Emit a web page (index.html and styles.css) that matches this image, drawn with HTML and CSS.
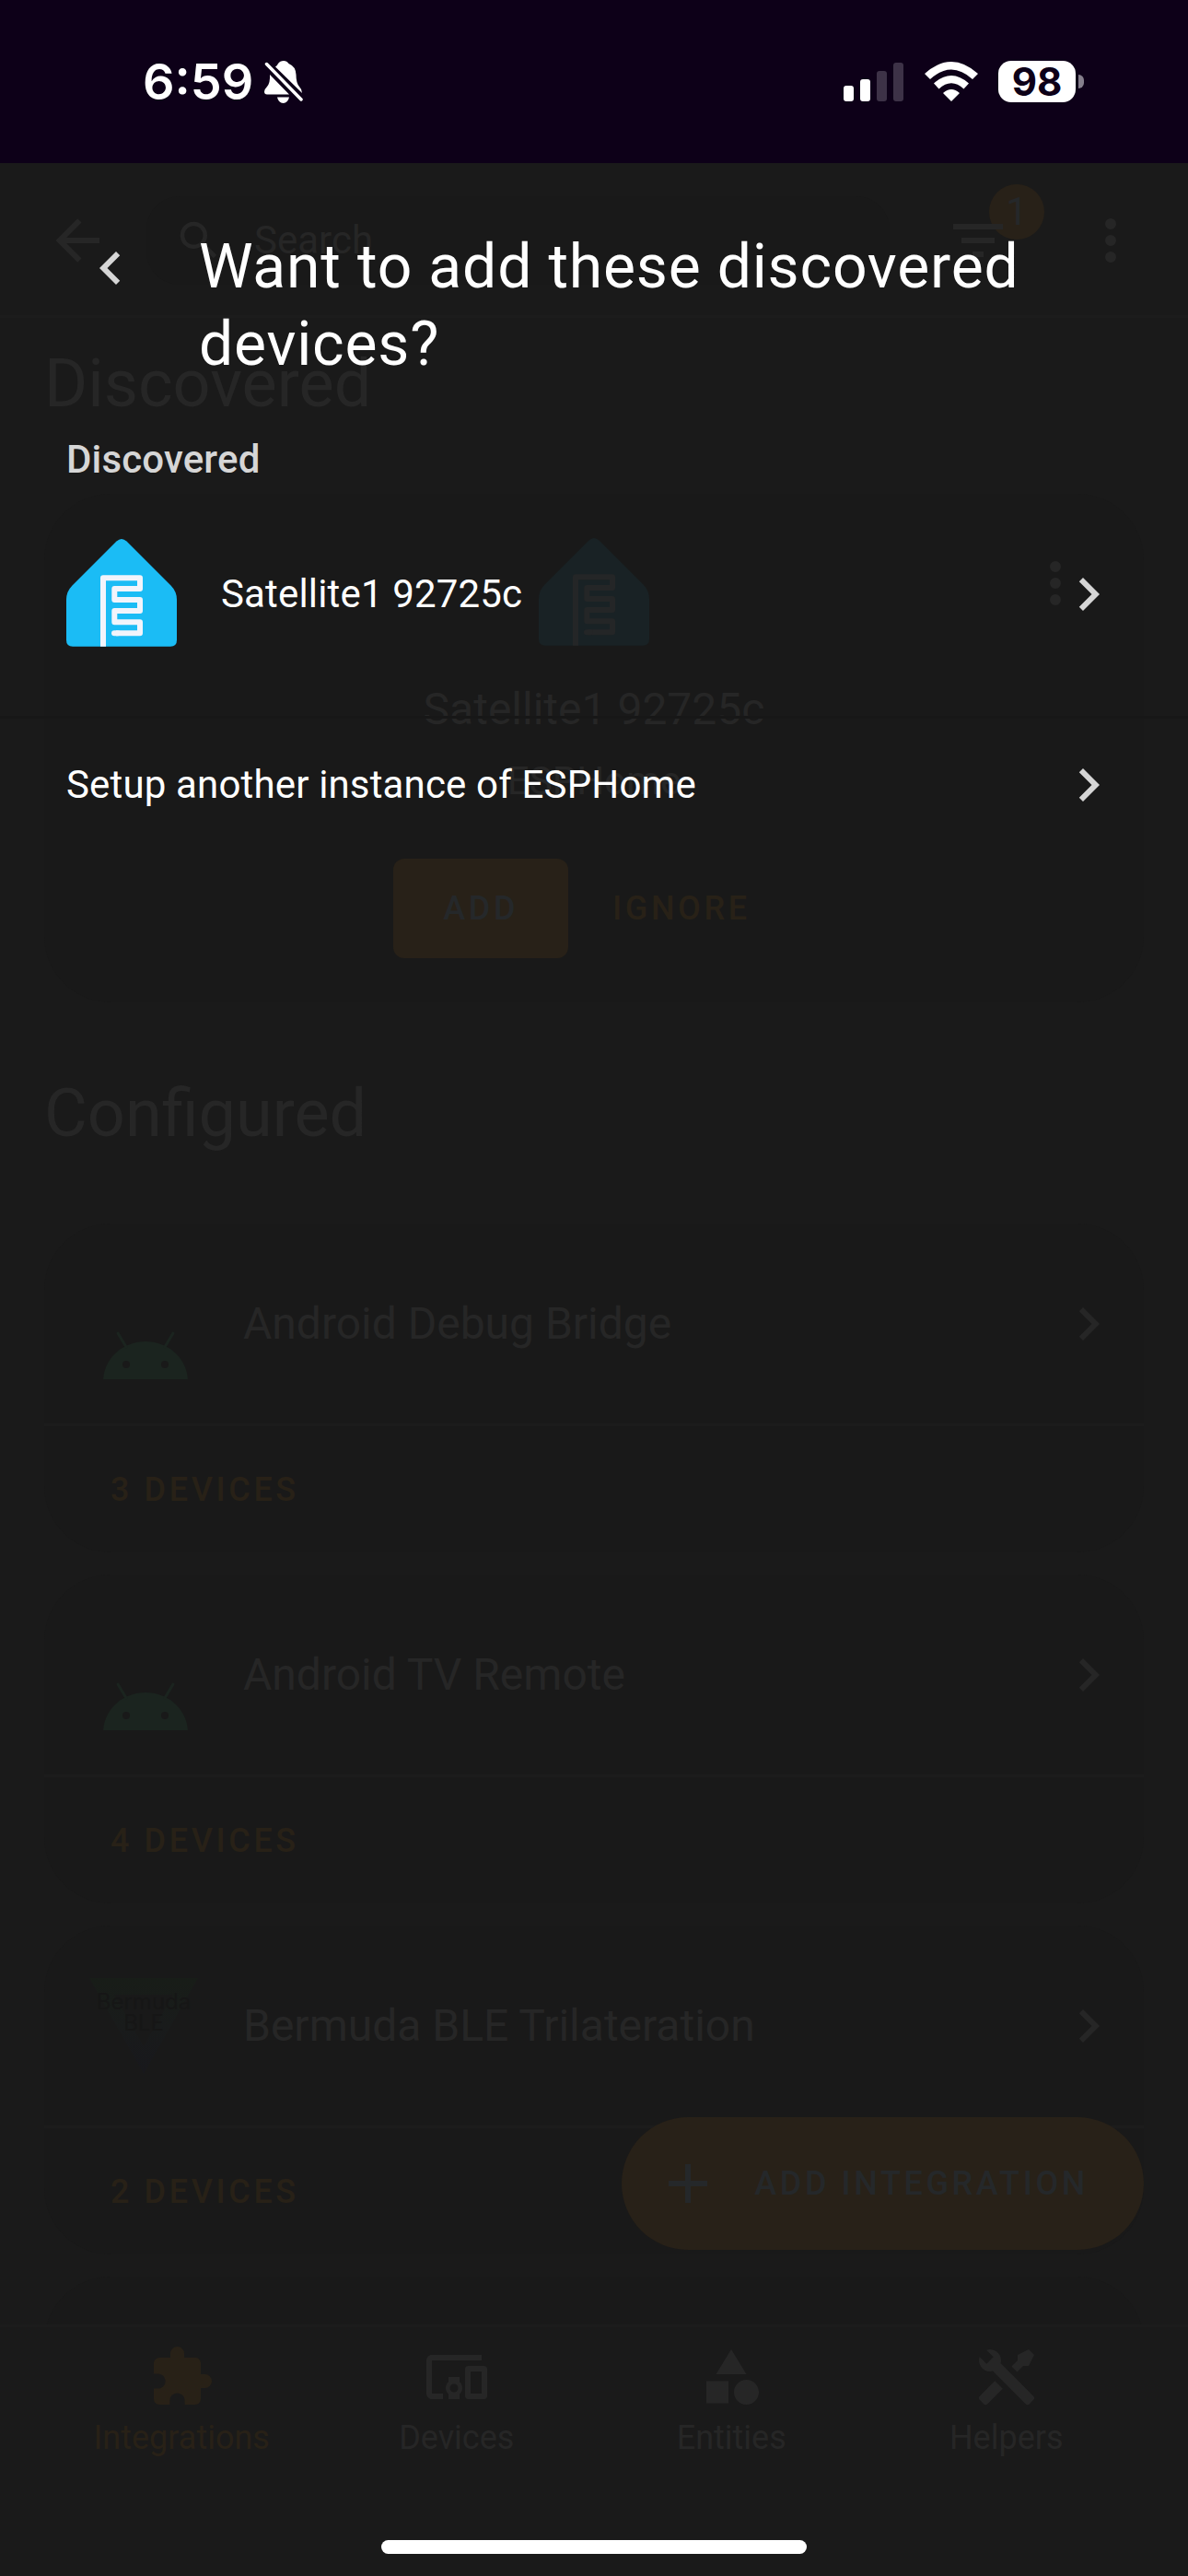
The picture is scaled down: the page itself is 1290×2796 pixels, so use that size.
FILE: index.html
```html
<!DOCTYPE html>
<html lang="en">
<head>
<meta charset="utf-8">
<meta name="viewport" content="width=device-width, initial-scale=1">
<title>Integrations</title>
<link rel="stylesheet" href="styles.css">
</head>
<body>
<svg class="sprite" aria-hidden="true">
  <symbol id="chevron-right" viewBox="0 0 24 24"><path d="M8.59,16.58L13.17,12L8.59,7.41L10,6L16,12L10,18L8.59,16.58Z"/></symbol>
  <symbol id="dots" viewBox="0 0 24 24"><path d="M12,16A2,2 0 0,1 14,18A2,2 0 0,1 12,20A2,2 0 0,1 10,18A2,2 0 0,1 12,16M12,10A2,2 0 0,1 14,12A2,2 0 0,1 12,14A2,2 0 0,1 10,12A2,2 0 0,1 12,10M12,4A2,2 0 0,1 14,6A2,2 0 0,1 12,8A2,2 0 0,1 10,6A2,2 0 0,1 12,4Z"/></symbol>
  <symbol id="esphome" viewBox="0 0 120 120">
    <path d="M54.5 2.5Q60-2.5 65.5 2.5L113.5 50.5Q120 57 120 66V109.700Q120 116.700 113 116.700H7Q0 116.700 0 109.700V66Q0 57 6.500 50.500Z"/>
    <g fill="none" stroke="currentColor" stroke-width="6" stroke-linejoin="round">
      <path d="M40 116.700V42.300H80V54H52.300V66H80V78H52.300V90.300H80V102.300H54"/>
      <path d="M56 102.300H52" stroke-linecap="round"/>
    </g>
  </symbol>
  <symbol id="android" viewBox="0 0 120 120">
    <path d="M16 120C18 95 39 79 62 79S106 95 108 120Z"/>
    <path d="M32 70L41 85M92 70L83 85" fill="none" stroke="#1b241f" stroke-width="3" stroke-linecap="round"/>
    <g fill="#191919"><circle cx="41" cy="104" r="4"/><circle cx="83" cy="104" r="4"/></g>
  </symbol>
</svg>

<header class="status">
  <div class="status-group">
    <span class="time">6:59</span>
    <svg class="bell" viewBox="0 0 42 46" aria-hidden="true">
      <path fill="#fff" d="M12 6.500Q14 5.500 15 3Q17 0 21 0Q24.500 0 26.500 3Q34 6 34.500 15Q34.500 24 38 28Q41 31 41 35ZM6 15L27 36.500H3Q0 36.500 0 33.500Q0 31 3 28Q6.500 24 6 15ZM14 39.500H27Q25.500 46 20.500 46T14 39.500Z"/>
      <path d="M2.500 3.500L40 42" stroke="#fff" stroke-width="3.500" stroke-linecap="round"/>
    </svg>
  </div>
  <div class="status-group status-right">
    <svg class="signal" viewBox="0 0 66 42" aria-hidden="true"><g fill="#fff"><rect y="25" width="11" height="17" rx="3"/><rect x="18" y="18" width="11" height="24" rx="3"/></g><g fill="#3d3247"><rect x="36" y="9" width="11" height="33" rx="3"/><rect x="54" width="11" height="42" rx="3"/></g></svg>
    <svg class="wifi" viewBox="0 0 58 43" aria-hidden="true"><path fill="#fff" d="M29 43L20 34Q29 26 38 34ZM15.500 29.500L10 23.500Q29 6.500 48 23.500L42.500 29.500Q29 17 15.500 29.500ZM6 19L0 13Q29-13 58 13L52 19Q29-2 6 19Z"/></svg>
    <div class="battery"><span class="battery-body">98</span><span class="battery-tip"></span></div>
  </div>
</header>

<main class="stage">
  <div class="app">
    <div class="scroll">
      <div class="toolbar">
        <button class="icon-btn" aria-label="Back"><svg class="icon" viewBox="0 0 24 24"><path d="M20,11V13H8L13.5,18.5L12.080,19.920L4.160,12L12.080,4.080L13.500,5.500L8,11H20Z"/></svg></button>
        <label class="search">
          <svg class="icon-small" viewBox="0 0 24 24"><path d="M9.5,3A6.5,6.5 0 0,1 16,9.5C16,11.11 15.41,12.59 14.44,13.73L14.71,14H15.5L20.5,19L19,20.5L14,15.5V14.71L13.73,14.44C12.59,15.41 11.11,16 9.5,16A6.5,6.5 0 0,1 3,9.5A6.5,6.5 0 0,1 9.5,3M9.5,5C7,5 5,7 5,9.5C5,12 7,14 9.5,14C12,14 14,12 14,9.5C14,7 12,5 9.5,5Z"/></svg>
          <input type="search" placeholder="Search" aria-label="Search integrations">
        </label>
        <button class="icon-btn filter" aria-label="Filter"><svg class="icon" viewBox="0 0 24 24"><path d="M6,13H18V11H6M3,6V8H21V6M10,18H14V16H10V18Z"/></svg><span class="badge">1</span></button>
        <button class="icon-btn" aria-label="More"><svg class="icon"><use href="#dots"/></svg></button>
      </div>

      <div class="content">
        <h2 class="section-title">Discovered</h2>
        <section class="card discovered">
          <button class="icon-btn card-menu" aria-label="More"><svg class="icon"><use href="#dots"/></svg></button>
          <svg class="brand brand-ghost"><use href="#esphome"/></svg>
          <h3 class="card-title">Satellite1 92725c</h3>
          <p class="card-sub">ESPHome</p>
          <div class="actions"><button class="btn btn-filled">ADD</button><button class="btn">IGNORE</button></div>
        </section>

        <h2 class="section-title">Configured</h2>
        <div class="cards">
          <section class="card">
            <a class="card-head" href="#adb"><svg class="brand brand-android"><use href="#android"/></svg><span class="card-title">Android Debug Bridge</span><svg class="icon"><use href="#chevron-right"/></svg></a>
            <a class="card-foot" href="#adb-devices">3 DEVICES</a>
          </section>
          <section class="card">
            <a class="card-head" href="#atv"><svg class="brand brand-android"><use href="#android"/></svg><span class="card-title">Android TV Remote</span><svg class="icon"><use href="#chevron-right"/></svg></a>
            <a class="card-foot" href="#atv-devices">4 DEVICES</a>
          </section>
          <section class="card">
            <a class="card-head" href="#bermuda">
              <svg class="brand" viewBox="0 0 120 120">
                <defs><linearGradient id="sea" x2="0" y2="1"><stop offset="0" stop-color="#181d18"/><stop offset=".5" stop-color="#191b1b"/><stop offset="1" stop-color="#18181c"/></linearGradient></defs>
                <path fill="url(#sea)" fill-rule="evenodd" d="M1 8H119L60 112ZM28 26L60 82L92 26Z"/>
                <g class="bermuda-text" text-anchor="middle"><text x="60" y="42">Bermuda</text><text x="60" y="65">BLE</text></g>
              </svg>
              <span class="card-title">Bermuda BLE Trilateration</span><svg class="icon"><use href="#chevron-right"/></svg></a>
            <a class="card-foot" href="#bermuda-devices">2 DEVICES</a>
          </section>
          <section class="card"></section>
        </div>
      </div>
      <button class="fab"><svg class="icon" viewBox="0 0 24 24"><path d="M19,13H13V19H11V13H5V11H11V5H13V11H19V13Z"/></svg>ADD INTEGRATION</button>
    </div>

    <nav class="tabs">
      <a class="tab tab-active" href="#integrations"><svg class="icon" viewBox="0 0 24 24"><path d="M20.5,11H19V7C19,5.89 18.1,5 17,5H13V3.5A2.5,2.5 0 0,0 10.5,1A2.5,2.5 0 0,0 8,3.5V5H4A2,2 0 0,0 2,7V10.8H3.5C5,10.8 6.2,12 6.2,13.5C6.2,15 5,16.2 3.5,16.2H2V20A2,2 0 0,0 4,22H7.8V20.5C7.8,19 9,17.8 10.5,17.8C12,17.8 13.2,19 13.2,20.5V22H17A2,2 0 0,0 19,20V16H20.5A2.5,2.5 0 0,0 23,13.5A2.5,2.5 0 0,0 20.5,11Z"/></svg>Integrations</a>
      <a class="tab" href="#devices"><svg class="icon" viewBox="0 0 24 24"><path d="M3 6H21V4H3C1.9 4 1 4.9 1 6V18C1 19.1 1.9 20 3 20H7V18H3V6M13 12H9V13.78C8.39 14.33 8 15.11 8 16C8 16.89 8.39 17.67 9 18.22V20H13V18.22C13.61 17.67 14 16.88 14 16S13.61 14.33 13 13.78V12M11 17.5C10.17 17.5 9.5 16.83 9.5 16S10.17 14.5 11 14.5 12.5 15.17 12.5 16 11.83 17.5 11 17.5M22 8H16C15.5 8 15 8.500 15 9V19C15 19.500 15.500 20 16 20H22C22.500 20 23 19.500 23 19V9C23 8.500 22.500 8 22 8M21 18H17V10H21V18Z"/></svg>Devices</a>
      <a class="tab" href="#entities"><svg class="icon" viewBox="0 0 24 24"><path d="M11,13.5V21.5H3V13.5H11M12,2L17.5,11H6.5L12,2M17.5,13C20,13 22,15 22,17.5C22,20 20,22 17.5,22C15,22 13,20 13,17.5C13,15 15,13 17.5,13Z"/></svg>Entities</a>
      <a class="tab" href="#helpers"><svg class="icon" viewBox="0 0 24 24"><path d="M21.71 20.29L20.29 21.71A1 1 0 0 1 18.88 21.71L7 9.85A3.81 3.81 0 0 1 6 10A4 4 0 0 1 2.22 4.7L4.76 7.24L5.29 6.71L6.71 5.29L7.24 4.76L4.7 2.22A4 4 0 0 1 10 6A3.81 3.81 0 0 1 9.85 7L21.71 18.88A1 1 0 0 1 21.71 20.29M2.29 18.88A1 1 0 0 0 2.29 20.29L3.71 21.71A1 1 0 0 0 5.12 21.71L10.59 16.25L7.76 13.42M20 2L16 4V6L13.83 8.17L15.83 10.17L18 8H20L22 4Z"/></svg>Helpers</a>
    </nav>
  </div>

  <div class="dialog" role="dialog" aria-labelledby="dialog-title">
    <div class="dialog-head">
      <button class="icon-btn dialog-back" aria-label="Back"><svg class="icon" viewBox="0 0 24 24"><path d="M15.41,16.58L10.83,12L15.41,7.41L14,6L8,12L14,18L15.41,16.58Z"/></svg></button>
      <h1 id="dialog-title">Want to add these discovered devices?</h1>
    </div>
    <h2 class="dialog-label">Discovered</h2>
    <button class="row row-device"><svg class="brand brand-esphome"><use href="#esphome"/></svg><span class="row-text">Satellite1 92725c</span><svg class="icon"><use href="#chevron-right"/></svg></button>
    <hr class="divider">
    <button class="row"><span class="row-text">Setup another instance of ESPHome</span><svg class="icon"><use href="#chevron-right"/></svg></button>
    <div class="home-indicator"></div>
  </div>
</main>
</body>
</html>
```
FILE: styles.css
```css
:root {
  --page: #1a1a1a;
  --card: #191919;
  --line: #1c1c1c;
  --dim: #262626;
  --amber-fill: #282118;
  --amber-text: #282117;
  --on-amber: #25282a;
}

* { box-sizing: border-box; }

body {
  margin: 0;
  height: 100vh;
  display: flex;
  flex-direction: column;
  background: var(--page);
  color: #fff;
  font-family: Roboto, "Liberation Sans", sans-serif;
}

h1, h2, h3, p { margin: 0; font-weight: 400; }
a { color: inherit; text-decoration: none; }
button {
  padding: 0;
  border: 0;
  background: none;
  color: inherit;
  font: inherit;
  letter-spacing: inherit;
  text-align: left;
}
svg { flex: none; display: block; fill: currentColor; }
.sprite { position: absolute; width: 0; height: 0; }
.icon { width: 72px; height: 72px; }
.icon-small { width: 54px; height: 54px; }
.brand { width: 120px; height: 120px; }

/* Status bar */
.status {
  flex: none;
  height: 177px;
  padding: 0 113px 0 155px;
  display: flex;
  align-items: center;
  justify-content: space-between;
  background: #0d0018;
  font-family: Inter, "Liberation Sans", sans-serif;
}
.status-group { display: flex; align-items: center; gap: 12px; }
.status-right { gap: 22px; }
.time { font-size: 54px; line-height: 60px; font-weight: 600; }
.bell { width: 42px; height: 46px; }
.signal { width: 66px; height: 42px; }
.wifi { width: 58px; height: 43px; }
.battery { display: flex; align-items: center; gap: 3px; }
.battery-body {
  width: 84px;
  height: 45px;
  border-radius: 14px;
  background: #fff;
  color: #0d0018;
  font-size: 42px;
  line-height: 45px;
  font-weight: 700;
  text-align: center;
}
.battery-tip { width: 6px; height: 15px; border-radius: 0 6px 6px 0; background: #857f8c; }

/* The dialog is stacked over the page behind it */
.stage { flex: 1; min-height: 0; display: grid; grid-template: minmax(0, 1fr) / minmax(0, 1fr); }
.app, .dialog { grid-area: 1 / 1; min-width: 0; min-height: 0; }

/* Page behind */
.app { display: flex; flex-direction: column; color: var(--dim); }
.scroll { position: relative; flex: 1; min-height: 0; overflow: hidden; }
.toolbar {
  height: 168px;
  padding: 0 48px;
  display: flex;
  align-items: center;
  box-shadow: inset 0 -3px var(--line);
}
.search {
  flex: 1;
  height: 96px;
  margin: 0 60px 0 39px;
  padding: 0 30px;
  display: flex;
  align-items: center;
  gap: 33px;
  border-radius: 36px;
  background: #191919;
}
.search input {
  flex: 1;
  min-width: 0;
  padding: 0;
  border: 0;
  outline: 0;
  background: none;
  color: inherit;
  font: 42px/48px Roboto, "Liberation Sans", sans-serif;
}
.search input::placeholder { color: inherit; opacity: 1; }
.filter { position: relative; margin-right: 72px; }
.badge {
  position: absolute;
  top: -25px;
  right: -36px;
  width: 60px;
  height: 60px;
  border-radius: 50%;
  background: var(--amber-fill);
  color: var(--on-amber);
  font-size: 42px;
  line-height: 60px;
  text-align: center;
  z-index: -1;
}
.content { padding: 0 48px; }
.section-title { padding: 79px 0 77px; font-size: 72px; line-height: 84px; }
.section-title:first-child { padding-top: 30px; }
.card { border-radius: 72px; background: var(--card); }
.discovered {
  position: relative;
  padding: 48px;
  display: flex;
  flex-direction: column;
  align-items: center;
}
.card-menu { position: absolute; top: 61px; right: 60px; }
.brand-ghost { fill: #192225; color: #242627; margin-bottom: 36px; }
.card-title { font-size: 48px; line-height: 60px; }
.card-sub { margin: 24px 0 60px; font-size: 42px; line-height: 48px; }
.actions { display: flex; }
.btn, .card-foot, .fab { font-size: 36px; line-height: 48px; font-weight: 500; letter-spacing: .1em; }
.btn { height: 108px; padding: 0 48px; color: var(--amber-text); }
.btn-filled { padding: 0 54px; border-radius: 12px; background: var(--amber-fill); color: var(--on-amber); }

.cards { display: grid; gap: 24px; }
.cards .card { height: 357px; }
.card-head {
  height: 220px;
  padding: 0 24px 0 48px;
  display: flex;
  align-items: center;
  gap: 48px;
  border-bottom: 3px solid var(--line);
}
.card-head .card-title { flex: 1; }
.brand-android { fill: #1b241f; }
.bermuda-text { fill: #161616; font: 24px Inter, sans-serif; }
.card-foot { height: 137px; padding-left: 72px; display: flex; align-items: center; color: var(--amber-text); }
.fab {
  position: absolute;
  right: 48px;
  bottom: 81px;
  height: 144px;
  padding: 0 60px 0 36px;
  display: flex;
  align-items: center;
  gap: 36px;
  border-radius: 72px;
  background: var(--amber-fill);
  color: var(--on-amber);
}

.tabs {
  flex: none;
  height: 273px;
  padding: 18px 48px 0;
  display: grid;
  grid-template-columns: repeat(4, 1fr);
  align-items: start;
  border-top: 3px solid var(--line);
}
.tab { display: grid; justify-items: center; gap: 6px; font-size: 36px; line-height: 48px; }
.tab-active { color: var(--amber-text); }

/* Dialog */
.dialog { position: relative; padding-top: 71px; display: flex; flex-direction: column; letter-spacing: .01em; }
.dialog-head { padding: 0 72px 0 84px; display: flex; align-items: flex-start; gap: 60px; }
.dialog-head h1 { font-size: 66px; line-height: 84px; letter-spacing: .0125em; }
.dialog-back { padding-top: 7px; color: #d6d6d6; }
.dialog-label { padding: 53px 72px 8px; color: #d6d6d6; font-size: 42px; line-height: 60px; font-weight: 500; }
.row { min-height: 144px; padding: 0 72px; display: flex; align-items: center; gap: 48px; font-size: 42px; line-height: 60px; }
.row-device { min-height: 216px; }
.row-text { flex: 1; }
.row .icon { color: #d6d6d6; }
.brand-esphome { fill: #1bbcf5; color: #f2f4fb; }
.divider { width: 100%; margin: 24px 0 0; border: 0; border-top: 3px solid #171717; }
.home-indicator {
  width: 462px;
  height: 15px;
  margin: auto auto 24px;
  border-radius: 8px;
  background: #fff;
}
```
